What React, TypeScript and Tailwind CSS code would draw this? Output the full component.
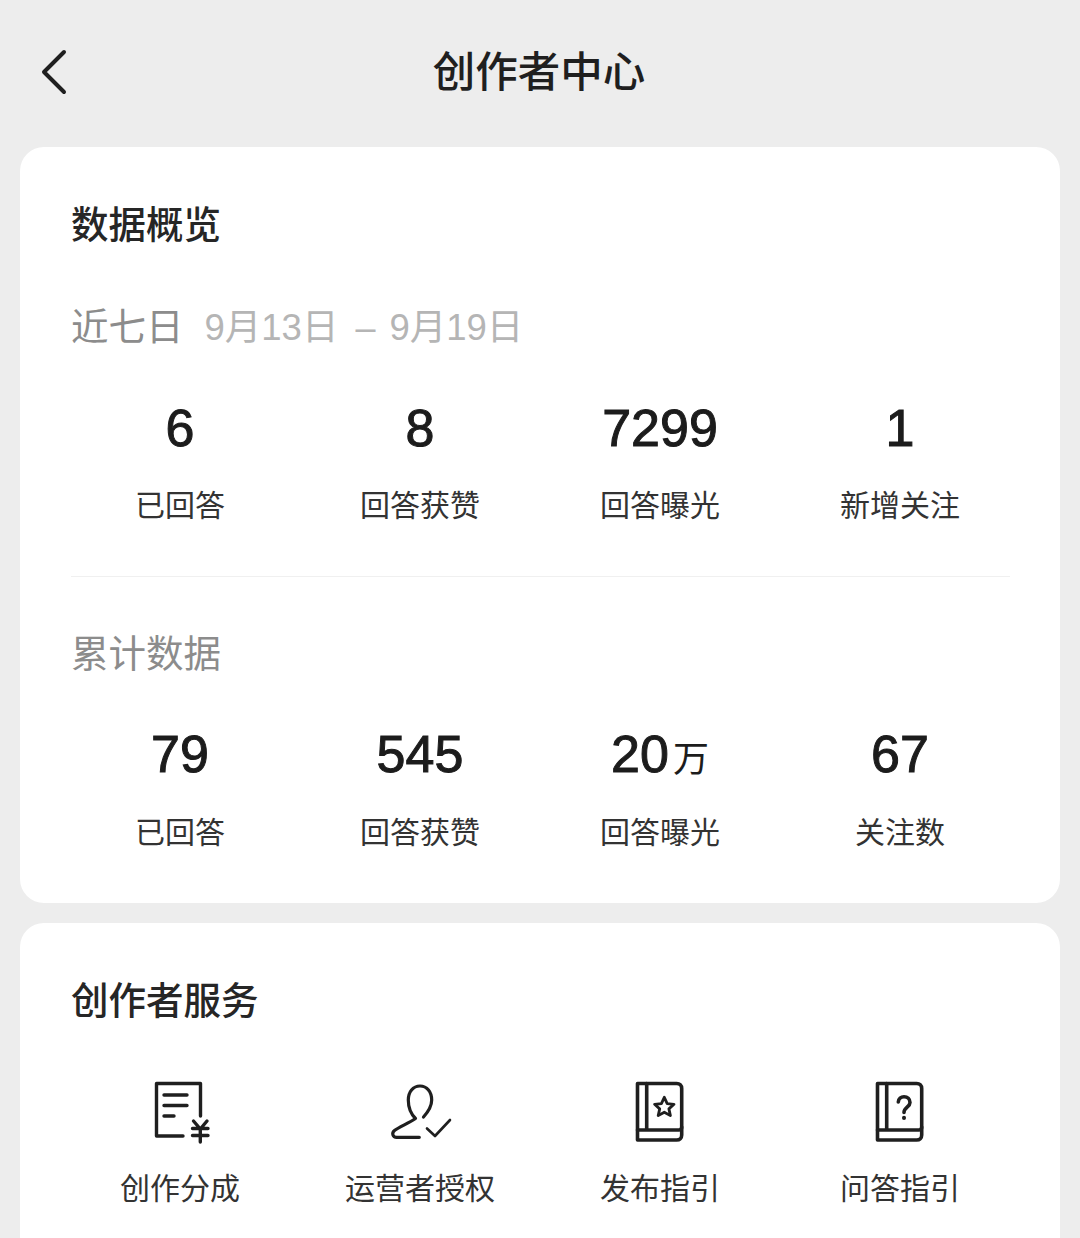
const week = [
  { value: '6', label: '已回答' },
  { value: '8', label: '回答获赞' },
  { value: '7299', label: '回答曝光' },
  { value: '1', label: '新增关注' },
];

const total = [
  { value: '79', label: '已回答' },
  { value: '545', label: '回答获赞' },
  { value: '20', unit: '万', label: '回答曝光' },
  { value: '67', label: '关注数' },
];

type Stat = { value: string; unit?: string; label: string };

const StatGrid = ({ items, gap }: { items: Stat[]; gap: string }) => (
  <div className="grid grid-cols-4">
    {items.map((item) => (
      <div key={item.label + item.value} className="flex flex-col items-center">
        <div className="flex items-baseline h-[60px] leading-[60px] text-[52px] text-[#1c1c1c] [-webkit-text-stroke:1px_#1c1c1c]">
          {item.value}
          {item.unit && <span className="text-[36px] ml-1 [-webkit-text-stroke:0]">{item.unit}</span>}
        </div>
        <div className={`${gap} h-[40px] leading-[40px] text-[30px] text-[#333333]`}>{item.label}</div>
      </div>
    ))}
  </div>
);

const BackIcon = () => (
  <svg width="26" height="46" viewBox="0 0 26 46" fill="none" stroke="#1f1f1f" strokeWidth="4" strokeLinecap="round" strokeLinejoin="round">
    <path d="M23 3 L3 23 L23 43" />
  </svg>
);

const svgProps = {
  width: 60,
  height: 64,
  viewBox: '0 0 60 64',
  fill: 'none',
  stroke: '#1f1f1f',
  strokeWidth: 3.4,
  strokeLinecap: 'round' as const,
  strokeLinejoin: 'round' as const,
  className: 'overflow-visible',
};

const ReceiptIcon = () => (
  <svg {...svgProps}>
    <path d="M33 56 H6.5 V3.5 H50.5 V36" />
    <path d="M14 15 H37 M14 25.5 H37 M14 36 H24" />
    <path d="M43.5 41 L50.3 49 L57 41 M42.5 48.5 H58 M42.5 55.5 H58 M50.3 49 V62" />
  </svg>
);

const AuthIcon = () => (
  <svg {...svgProps} strokeWidth={3.2}>
    <path d="M29.3 57.3 H6.7 C2.5 57.3 1.5 53 4.5 50.5 C9 47 19 43 25.5 38.5 C20 33 18.3 27 18.3 20 C18.3 12 23 6 30 6 C37 6 41.7 12 41.7 20 C41.7 26 38 32 33.5 37" />
    <path d="M37 48.5 L45 56 L60 40" strokeWidth={2.6} />
  </svg>
);

const BookFrame = () => (
  <>
    <path d="M7.5 3.5 H46.7 C49.7 3.5 51.7 5.5 51.7 8.5 V55 C51.7 58 49.7 60 46.7 60 H7.5 Z" />
    <path d="M16.7 3.5 V50 M7.5 50 H49 C50.5 50 51.7 49 51.7 47" />
  </>
);

const StarBookIcon = () => (
  <svg {...svgProps} strokeWidth={3.6}>
    <BookFrame />
    <path
      d="M34.3 17.3 L37.2 23.6 L44 24.3 L38.9 28.9 L40.4 35.6 L34.3 32.2 L28.2 35.6 L29.7 28.9 L24.6 24.3 L31.4 23.6 Z"
      strokeWidth={2.8}
    />
  </svg>
);

const QuestionBookIcon = () => (
  <svg {...svgProps} strokeWidth={3.6}>
    <BookFrame />
    <path d="M28.3 22 C28.5 18.5 31 16.7 34 16.7 C37.5 16.7 40 19 40 22.5 C40 27 34 27.5 34 32.5" />
    <path d="M34 37.8 V38" strokeWidth={4} />
  </svg>
);

const services = [
  { label: '创作分成', icon: <ReceiptIcon /> },
  { label: '运营者授权', icon: <AuthIcon /> },
  { label: '发布指引', icon: <StarBookIcon /> },
  { label: '问答指引', icon: <QuestionBookIcon /> },
];

export default function App() {
  return (
    <div className="h-[1238px] w-[1080px] overflow-hidden bg-[#ededed] font-['Liberation_Sans','Noto_Sans_CJK_SC',sans-serif]">
      {/* Header */}
      <div className="grid grid-cols-[1fr_auto_1fr] items-center h-[143px] pl-[41px]">
        <BackIcon />
        <div className="text-[42.5px] font-medium text-[#1f1f1f] -ml-[43px] pt-[2px]">创作者中心</div>
        <div />
      </div>

      <div className="mt-[4px] px-[20px] flex flex-col gap-[20px]">
        {/* Overview */}
        <div className="rounded-[24px] bg-white pt-[53px] pb-[50px] px-[40px]">
          <div className="pl-[11px] h-[50px] leading-[50px] text-[37.5px] font-medium text-[#262626]">数据概览</div>
          <div className="pl-[11px] mt-[52px] h-[50px] leading-[50px] flex items-baseline whitespace-nowrap">
            <span className="text-[37.5px] text-[#8c8c8c]">近七日</span>
            <span className="ml-[21px] text-[36.5px] text-[#b5b5b5]">9月13日</span>
            <span className="ml-[17px] text-[36px] text-[#b5b5b5]">–</span>
            <span className="ml-[14px] text-[36.5px] text-[#b5b5b5]">9月19日</span>
          </div>
          <div className="mt-[46px]">
            <StatGrid items={week} gap="mt-[28px]" />
          </div>
          <div className="mt-[50px] ml-[11px] mr-[10px] h-px bg-[#f0f0f0]" />
          <div className="pl-[11px] mt-[52px] h-[50px] leading-[50px] text-[37.5px] text-[#8c8c8c]">累计数据</div>
          <div className="mt-[45px]">
            <StatGrid items={total} gap="mt-[29px]" />
          </div>
        </div>

        {/* Services */}
        <div className="rounded-[24px] bg-white pt-[53px] pb-[51px] px-[40px]">
          <div className="pl-[11px] h-[50px] leading-[50px] text-[37.5px] font-medium text-[#262626]">创作者服务</div>
          <div className="mt-[54px] grid grid-cols-4">
            {services.map((s) => (
              <div key={s.label} className="flex flex-col items-center">
                {s.icon}
                <div className="mt-[25px] h-[40px] leading-[40px] text-[30px] text-[#333333]">{s.label}</div>
              </div>
            ))}
          </div>
        </div>
      </div>
    </div>
  );
}
